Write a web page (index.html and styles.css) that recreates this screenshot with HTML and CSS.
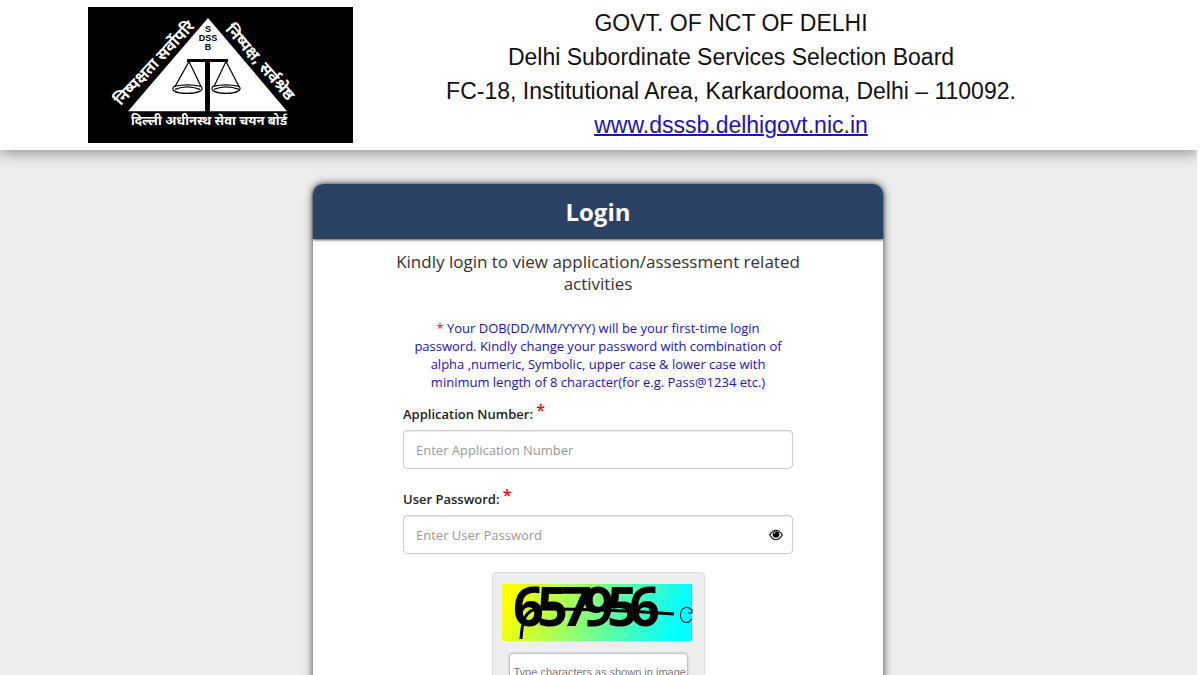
FILE: index.html
```html
<!DOCTYPE html>
<html lang="en">
<head>
<meta charset="utf-8">
<title>DSSSB Login</title>
<link rel="stylesheet" href="styles.css">
</head>
<body>
<header class="site-header">
  <svg class="logo" viewBox="0 0 265 137" preserveAspectRatio="none" role="img" aria-label="Delhi Subordinate Services Selection Board">
    <rect width="265" height="137" fill="#000"/>
    <path d="M120 11 199 105H40Z" fill="#fff"/>
    <path d="M117 55H122V107H117Z"/>
    <path d="M99 54H140" stroke="#000" stroke-width="3"/>
    <g fill="none" stroke="#000" stroke-width="1.2">
      <path d="M101 55 87 80M101 55 113 80M138 55 126 80M138 55 151 80"/>
      <path d="M86 80Q99 77 113 80C117 84 110 87 99 87S82 84 86 80ZM87 83Q99 78 112 83"/>
      <path d="M125 80Q138 77 151 80C155 84 148 87 138 87S121 84 125 80ZM126 83Q138 78 151 83"/>
    </g>
    <g class="logo-initials" text-anchor="middle">
      <text x="120" y="25">S</text><text x="120" y="34">DSS</text><text x="120" y="43">B</text>
    </g>
    <g fill="#fff" text-anchor="middle">
      <text class="motto-side" transform="translate(70 60) rotate(-47)">निष्पक्षता सर्वोपरि</text>
      <text class="motto-side" transform="translate(168 59) rotate(49)">निष्पक्ष, सर्वश्रेष्ठ</text>
      <text class="motto-base" x="121" y="119">दिल्ली अधीनस्थ सेवा चयन बोर्ड</text>
    </g>
  </svg>
  <div class="board">
    <div>GOVT. OF NCT OF DELHI</div>
    <div>Delhi Subordinate Services Selection Board</div>
    <div>FC-18, Institutional Area, Karkardooma, Delhi – 110092.</div>
    <a href="#">www.dsssb.delhigovt.nic.in</a>
  </div>
</header>
<main class="page">
  <section class="card">
    <h1 class="card-title">Login</h1>
    <form class="card-body">
      <p class="intro">Kindly login to view application/assessment related activities</p>
      <p class="hint"><span class="hint-star">*</span> Your DOB(DD/MM/YYYY) will be your first-time login password. Kindly change your password with combination of alpha ,numeric, Symbolic, upper case &amp; lower case with minimum length of 8 character(for e.g. Pass@1234 etc.)</p>
      <div class="field">
        <label for="app">Application Number: <sup class="req">*</sup></label>
        <input class="control" id="app" type="text" placeholder="Enter Application Number">
      </div>
      <div class="field">
        <label for="pwd">User Password: <sup class="req">*</sup></label>
        <div class="password">
          <input class="control" id="pwd" type="password" placeholder="Enter User Password">
          <button class="eye" type="button" aria-label="Show password">
            <svg viewBox="0 0 14 12"><path d="M.7 6Q7-3.500 13.300 6 7 15.500.7 6Z" fill="#fff" stroke="#000" stroke-width="1.200"/><circle cx="7" cy="5.500" r="3.300"/><path d="M5 5Q5 3.400 6.600 3.200" fill="none" stroke="#fff" stroke-width=".8"/></svg>
          </button>
        </div>
      </div>
      <div class="captcha">
        <svg class="captcha-image" viewBox="0 0 190 57" role="img" aria-label="Captcha">
          <defs><linearGradient id="g" gradientUnits="userSpaceOnUse" x1="10" y1="0" x2="170" y2="57"><stop offset="0" stop-color="#ff0"/><stop offset="1" stop-color="#0ff"/></linearGradient></defs>
          <rect width="190" height="57" fill="url(#g)"/>
          <text class="digits" y="42" x="11 35 59 81 105 127">657956</text>
          <path d="M19 55C20 39 22 25 37 25Q105 25 172 30" fill="none" stroke="#000" stroke-width="3"/>
        </svg>
        <button class="refresh" type="button" aria-label="Refresh captcha">
          <svg viewBox="0 0 14 18"><path d="M12 4C9-.5 1 1 1 9s8 10 11 4M12.500 3V7H8.500" fill="none" stroke="#123" stroke-width="1.100"/></svg>
        </button>
        <input class="captcha-input" type="text" aria-label="Captcha characters" placeholder="Type characters as shown in image">
      </div>
    </form>
  </section>
</main>
</body>
</html>
```
FILE: styles.css
```css
* { box-sizing: border-box; }
html { background: #fff; }
body {
  margin: 0 3px 0 0;
  height: 100vh;
  overflow: hidden;
  background: #ededed;
  color: #333;
  font-family: "Open Sans", sans-serif;
}
.site-header {
  display: flex;
  position: relative;
  padding: 7px 88px 7px;
  background: #fff;
  box-shadow: 0 3px 14px rgba(0, 0, 0, .4);
}
.logo { display: block; width: 265px; height: 136px; }
.board {
  flex: 1;
  margin-top: -1px;
  text-align: center;
  color: #111;
  font: 23px/34px "Liberation Sans", sans-serif;
}
.logo-initials { font: bold 9px "Liberation Sans", sans-serif; }
.motto-side { font: bold 16px "Noto Sans Devanagari", "Noto Sans", sans-serif; }
.motto-base { font: bold 13px "Noto Sans Devanagari", "Noto Sans", sans-serif; }
.board a { color: #1c12c4; text-decoration-thickness: 2px; }
.page { padding: 34px 1px 0 0; }
.card {
  width: 570px;
  margin: 0 auto;
  background: #fff;
  border-radius: 10px 10px 0 0;
  box-shadow: 0 0 8px rgba(0, 0, 0, .75);
}
.card-title {
  margin: 0;
  border-radius: 10px 10px 0 0;
  background: #2b4264;
  box-shadow: 0 1px 3px rgba(0, 0, 0, .7);
  color: #fff;
  text-align: center;
  font-size: 24px;
  line-height: 55px;
}
.card-body { padding: 12px 90px 60px; }
.intro { margin: 0 -12px 24px; text-align: center; font-size: 17px; line-height: 22px; }
.hint { margin: 0 0 11px; padding: 0 5px; text-align: center; color: #1a12c8; font-size: 13px; line-height: 18px; }
.hint-star { color: #f00; }
.field { margin-bottom: 18px; }
.field label { display: block; height: 28px; color: #222; font-size: 13px; font-weight: 600; line-height: 24px; }
.req { color: #f00; font-size: 16px; line-height: 0; vertical-align: 3px; }
.control {
  display: block;
  width: 100%;
  height: 39px;
  padding: 0 12px;
  border: 1px solid #ccc;
  border-radius: 4px;
  background: #fff;
  box-shadow: inset 0 1px 1px rgba(0, 0, 0, .08);
  font: 13px "Open Sans", sans-serif;
}
.control::placeholder { color: #999; }
.password { position: relative; }
button { padding: 0; border: 0; background: none; }
.eye { position: absolute; top: 14px; right: 10px; width: 14px; height: 12px; }
.eye svg, .refresh svg { display: block; width: 100%; height: 100%; }
.captcha {
  position: relative;
  width: 213px;
  margin: 0 auto;
  padding: 11px 9px;
  border: 1px solid #ddd;
  border-radius: 4px;
  background: #eee;
}
.captcha-image { display: block; width: 190px; height: 57px; }
.digits { font: 700 54px "Open Sans", sans-serif; }
.refresh { position: absolute; top: 33px; right: 10px; width: 15px; height: 18px; }
.captcha-input {
  display: block;
  width: 179px;
  height: 38px;
  margin: 12px auto 0;
  padding: 0 0 0 4px;
  border: 1px solid #bcc4ca;
  border-radius: 4px;
  background: #fff;
  box-shadow: 0 0 3px rgba(0, 0, 0, .2);
  font: 11px "Liberation Sans", sans-serif;
}
.captcha-input::placeholder { color: #777; }
```
